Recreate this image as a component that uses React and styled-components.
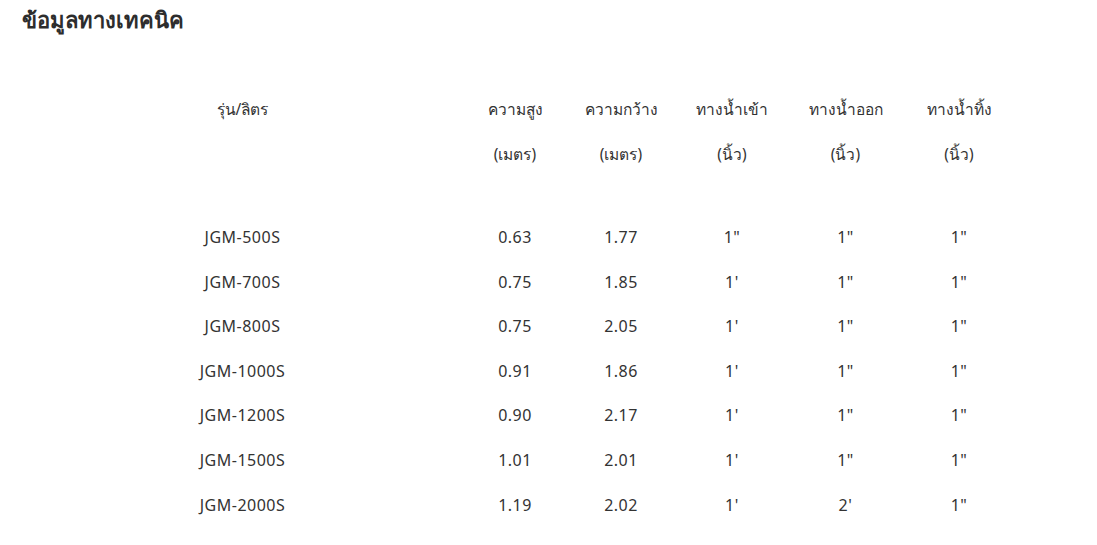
import React from "react";
import styled, { createGlobalStyle } from "styled-components";

const Global = createGlobalStyle`
  html, body { margin: 0; padding: 0; background: #fff; }
  body { font-family: "Noto Sans", "Open Sans", sans-serif; color: #333; }
`;

const Page = styled.div`
  padding: 3px 0 0 22px;
`;

const Title = styled.h2`
  margin: 0;
  font-size: 22px;
  font-weight: 700;
  line-height: 32px;
  color: #2d2d2d;
`;

const Table = styled.div`
  margin-top: 52px;
  display: grid;
  grid-template-columns: 441px 104px 108px 114px 113px 114px;
`;

const HeadCell = styled.div`
  text-align: center;
  font-size: 15.5px;
  line-height: 45px;
  padding-bottom: 38px;
`;

const Cell = styled.div`
  text-align: center;
  font-size: 16px;
  letter-spacing: 0.5px;
  line-height: 44.6px;
`;

const rows = [
  ["JGM-500S", "0.63", "1.77", "1\"", "1\"", "1\""],
  ["JGM-700S", "0.75", "1.85", "1'", "1\"", "1\""],
  ["JGM-800S", "0.75", "2.05", "1'", "1\"", "1\""],
  ["JGM-1000S", "0.91", "1.86", "1'", "1\"", "1\""],
  ["JGM-1200S", "0.90", "2.17", "1'", "1\"", "1\""],
  ["JGM-1500S", "1.01", "2.01", "1'", "1\"", "1\""],
  ["JGM-2000S", "1.19", "2.02", "1'", "2'", "1\""],
];

const heads = [
  ["รุ่น/ลิตร", ""],
  ["ความสูง", "(เมตร)"],
  ["ความกว้าง", "(เมตร)"],
  ["ทางน้ำเข้า", "(นิ้ว)"],
  ["ทางน้ำออก", "(นิ้ว)"],
  ["ทางน้ำทิ้ง", "(นิ้ว)"],
];

export default function App() {
  return (
    <>
      <Global />
      <Page>
        <Title>ข้อมูลทางเทคนิค</Title>
        <Table>
          {heads.map((h, i) => (
            <HeadCell key={"h" + i}>
              <div>{h[0]}</div>
              <div>{h[1] || "\u00a0"}</div>
            </HeadCell>
          ))}
          {rows.map((r, ri) =>
            r.map((c, ci) => <Cell key={ri + "-" + ci}>{c}</Cell>)
          )}
        </Table>
      </Page>
    </>
  );
}
